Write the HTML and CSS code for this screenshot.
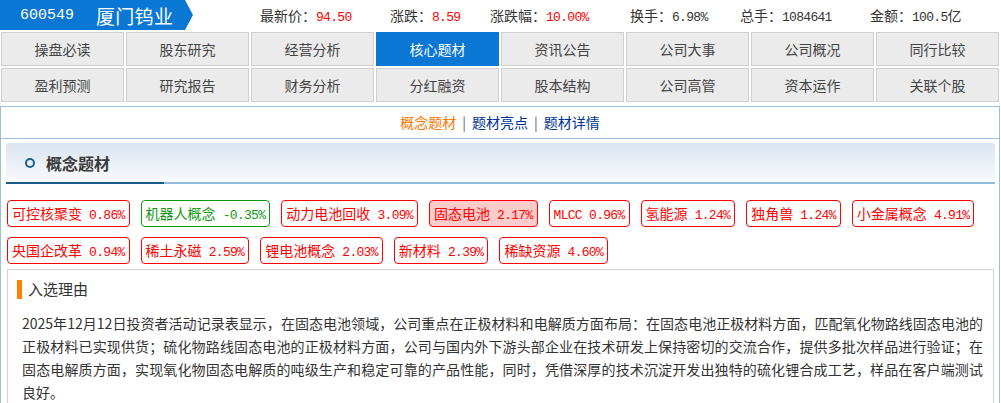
FILE: index.html
```html
<!DOCTYPE html>
<html lang="zh-CN">
<head>
    <meta charset="UTF-8">
    <title>厦门钨业 - 核心题材</title>
    <link rel="stylesheet" href="styles.css">
</head>
<body>
    <div class="header">
        <div class="badge">
            <span class="code">600549</span>
            <span class="name">厦门钨业</span>
        </div>
        <div class="stats">
            <span class="stat w130">最新价：<span class="num up">94.50</span></span>
            <span class="stat w100">涨跌：<span class="num up">8.59</span></span>
            <span class="stat w140">涨跌幅：<span class="num up">10.00%</span></span>
            <span class="stat w110">换手：<span class="num">6.98%</span></span>
            <span class="stat w130">总手：<span class="num">1084641</span></span>
            <span class="stat">金额：<span class="num">100.5</span>亿</span>
        </div>
    </div>

    <div class="nav">
        <a class="nav-item">操盘必读</a>
        <a class="nav-item">股东研究</a>
        <a class="nav-item">经营分析</a>
        <a class="nav-item active">核心题材</a>
        <a class="nav-item">资讯公告</a>
        <a class="nav-item">公司大事</a>
        <a class="nav-item">公司概况</a>
        <a class="nav-item">同行比较</a>
        <a class="nav-item">盈利预测</a>
        <a class="nav-item">研究报告</a>
        <a class="nav-item">财务分析</a>
        <a class="nav-item">分红融资</a>
        <a class="nav-item">股本结构</a>
        <a class="nav-item">公司高管</a>
        <a class="nav-item">资本运作</a>
        <a class="nav-item">关联个股</a>
    </div>

    <div class="panel">
        <div class="sublinks">
            <a class="current">概念题材</a><span class="sep">|</span><a>题材亮点</a><span class="sep">|</span><a>题材详情</a>
        </div>

        <div class="section-title">
            <span class="dot"></span>
            <h2>概念题材</h2>
        </div>

        <div class="tags">
            <span class="tag">可控核聚变<span class="num"> 0.86%</span></span>
            <span class="tag down">机器人概念<span class="num"> -0.35%</span></span>
            <span class="tag">动力电池回收<span class="num"> 3.09%</span></span>
            <span class="tag selected">固态电池<span class="num"> 2.17%</span></span>
            <span class="tag"><span class="num">MLCC 0.96%</span></span>
            <span class="tag">氢能源<span class="num"> 1.24%</span></span>
            <span class="tag">独角兽<span class="num"> 1.24%</span></span>
            <span class="tag">小金属概念<span class="num"> 4.91%</span></span>
            <span class="tag">央国企改革<span class="num"> 0.94%</span></span>
            <span class="tag">稀土永磁<span class="num"> 2.59%</span></span>
            <span class="tag">锂电池概念<span class="num"> 2.03%</span></span>
            <span class="tag">新材料<span class="num"> 2.39%</span></span>
            <span class="tag">稀缺资源<span class="num"> 4.60%</span></span>
        </div>

        <div class="reason">
            <div class="reason-head">
                <span class="bar"></span>
                <h3>入选理由</h3>
            </div>
            <p class="reason-text">2025年12月12日投资者活动记录表显示，在固态电池领域，公司重点在正极材料和电解质方面布局：在固态电池正极材料方面，匹配氧化物路线固态电池的正极材料已实现供货；硫化物路线固态电池的正极材料方面，公司与国内外下游头部企业在技术研发上保持密切的交流合作，提供多批次样品进行验证；在固态电解质方面，实现氧化物固态电解质的吨级生产和稳定可靠的产品性能，同时，凭借深厚的技术沉淀开发出独特的硫化锂合成工艺，样品在客户端测试良好。</p>
        </div>
    </div>
</body>
</html>
```

FILE: styles.css
```css
body {
    margin: 0;
    padding: 0;
    background-color: #ffffff;
    font-family: "Noto Sans CJK SC", "Liberation Sans", sans-serif;
    font-size: 14px;
    color: #333333;
}

a {
    text-decoration: none;
    cursor: pointer;
}

.num {
    font-family: "Liberation Mono", monospace;
    font-size: 13px;
    letter-spacing: -0.7px;
}

/* header */

.header {
    display: flex;
    align-items: center;
    height: 30px;
}

.badge {
    display: flex;
    align-items: center;
    width: 193px;
    height: 30px;
    background-color: #0a77d5;
    color: #ffffff;
    clip-path: polygon(0 0, 185px 0, 193px 50%, 185px 100%, 0 100%);
}

.badge .code {
    font-family: "Liberation Mono", monospace;
    font-size: 15px;
    margin-left: 20px;
}

.badge .name {
    font-size: 19px;
    margin-left: 22px;
    letter-spacing: 0.3px;
}

.stats {
    display: flex;
    margin-left: 67px;
    color: #333333;
}

.stat {
    white-space: nowrap;
}

.w100 { width: 100px; }
.w110 { width: 110px; }
.w130 { width: 130px; }
.w140 { width: 140px; }

.up {
    color: #ff0000;
}

/* nav */

.nav {
    display: grid;
    grid-template-columns: repeat(8, 123px);
    grid-auto-rows: 34px;
    gap: 2px;
    padding: 2px 0 0 1px;
}

.nav-item {
    display: flex;
    align-items: center;
    justify-content: center;
    background-color: #ebebeb;
    border: 1px solid #cfcfcf;
    color: #444444;
    font-size: 14px;
}

.nav-item.active {
    background-color: #0a77d5;
    border-color: #0a77d5;
    color: #ffffff;
}

/* panel */

.panel {
    margin-top: 4px;
    width: 998px;
    border: 1px solid #9cc0da;
    padding-bottom: 10px;
}

.sublinks {
    height: 31px;
    line-height: 31px;
    text-align: center;
    border-bottom: 1px solid #9cc0da;
}

.sublinks a {
    color: #003399;
}

.sublinks a.current {
    color: #ff7700;
}

.sublinks .sep {
    color: #666666;
    margin: 0 6px;
}

.section-title {
    display: flex;
    align-items: center;
    height: 39px;
    margin: 4px 4px 0 5px;
    padding-bottom: 2px;
    border-radius: 3px 3px 0 0;
    background:
        linear-gradient(#1b5e8c, #1b5e8c) no-repeat left bottom / 158px 2px,
        linear-gradient(#8fbcd6, #8fbcd6) no-repeat left bottom / 100% 2px,
        linear-gradient(to bottom, #dae4f0, #fbfcfe);
}

.section-title .dot {
    width: 6px;
    height: 6px;
    border: 2px solid #1d5f8d;
    border-radius: 50%;
    margin-left: 19px;
}

.section-title h2 {
    margin: 0 0 0 11px;
    font-size: 16px;
    font-weight: bold;
    color: #3a3a3a;
}

/* tags */

.tags {
    display: flex;
    flex-wrap: wrap;
    gap: 10px 11px;
    margin: 16px 0 0 0;
    padding: 0 8px 0 6px;
}

.tag {
    display: inline-block;
    height: 25px;
    line-height: 25px;
    padding: 0 4px;
    border: 1px solid #ff0000;
    border-radius: 4px;
    color: #ff0000;
    white-space: pre;
}

.tag.down {
    border-color: #109910;
    color: #109910;
}

.tag.selected {
    background-color: #ffcccc;
}

/* reason */

.reason {
    margin: 5px 5px 0 6px;
    border: 1px solid #d4d4d4;
    padding: 9px 10px 10px 14px;
}

.reason-head {
    display: flex;
    align-items: center;
    height: 20px;
    margin-left: -5px;
}

.reason-head .bar {
    width: 5px;
    height: 19px;
    background-color: #ff7f00;
}

.reason-head h3 {
    margin: 0 0 0 6px;
    font-size: 15px;
    line-height: 20px;
    font-weight: normal;
    color: #333333;
}

.reason-text {
    margin: 13px 0 0 0;
    line-height: 23px;
    text-align: justify;
    color: #333333;
}
```
